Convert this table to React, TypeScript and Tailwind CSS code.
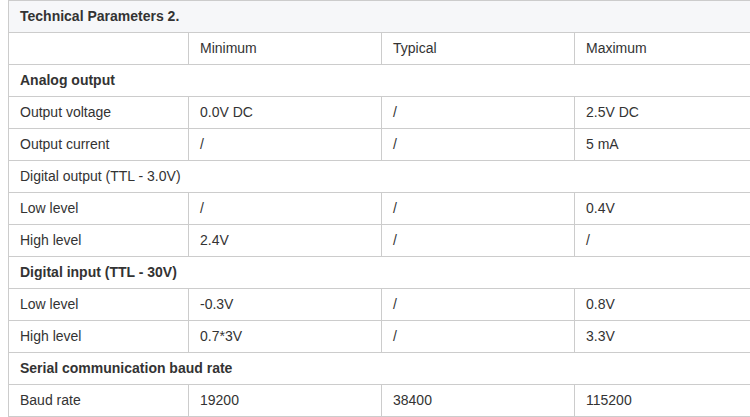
const ROWS: { cells: string[]; bold?: boolean; span?: boolean }[] = [
  { cells: ['', 'Minimum', 'Typical', 'Maximum'] },
  { cells: ['Analog output'], bold: true, span: true },
  { cells: ['Output voltage', '0.0V DC', '/', '2.5V DC'] },
  { cells: ['Output current', '/', '/', '5 mA'] },
  { cells: ['Digital output (TTL - 3.0V)'], span: true },
  { cells: ['Low level', '/', '/', '0.4V'] },
  { cells: ['High level', '2.4V', '/', '/'] },
  { cells: ['Digital input (TTL - 30V)'], bold: true, span: true },
  { cells: ['Low level', '-0.3V', '/', '0.8V'] },
  { cells: ['High level', '0.7*3V', '/', '3.3V'] },
  { cells: ['Serial communication baud rate'], bold: true, span: true },
  { cells: ['Baud rate', '19200', '38400', '115200'] },
];

export default function App() {
  return (
    <div className="w-[750px] h-[417px] overflow-hidden bg-white pl-2">
      <table
        className="w-[759px] table-fixed border-collapse text-[14px] text-[#333333]"
        style={{ fontFamily: '"Liberation Sans", Arial, sans-serif' }}
      >
        <colgroup>
          <col className="w-[180px]" />
          <col className="w-[193px]" />
          <col className="w-[193px]" />
          <col className="w-[193px]" />
        </colgroup>
        <tbody>
          <tr className="bg-[#f6f7f9]">
            <td colSpan={4} className="h-8 border border-[#cccccc] px-[11px] font-bold">
              Technical Parameters 2.
            </td>
          </tr>
          {ROWS.map((row, i) =>
            row.span ? (
              <tr key={i}>
                <td
                  colSpan={4}
                  className={`h-8 border border-[#cccccc] px-[11px] ${row.bold ? 'font-bold' : ''}`}
                >
                  {row.cells[0]}
                </td>
              </tr>
            ) : (
              <tr key={i}>
                {row.cells.map((c, j) => (
                  <td key={j} className="h-8 border border-[#cccccc] px-[11px]">
                    {c}
                  </td>
                ))}
              </tr>
            ),
          )}
        </tbody>
      </table>
    </div>
  );
}
